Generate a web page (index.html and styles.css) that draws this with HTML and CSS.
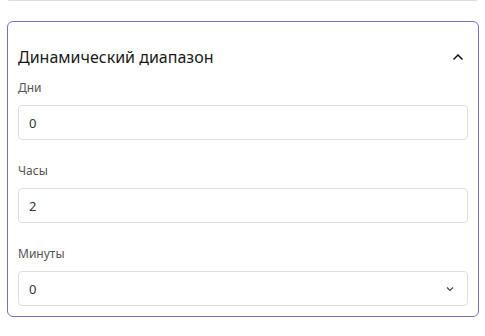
FILE: index.html
```html
<!DOCTYPE html>
<html lang="ru">
<head>
    <meta charset="UTF-8">
    <meta name="viewport" content="width=device-width, initial-scale=1.0">
    <title>Динамический диапазон</title>
    <link rel="stylesheet" href="styles.css">
</head>
<body>
    <div class="prev-panel"></div>

    <div class="range-card">
        <div class="range-header">
            <span class="range-title">Динамический диапазон</span>
            <svg class="chevron" width="14" height="14" viewBox="0 0 14 14">
                <path d="M2.5 9.5 L7 5 L11.5 9.5" fill="none" stroke="#111" stroke-width="1.5"/>
            </svg>
        </div>

        <div class="field">
            <label class="field-label">Дни</label>
            <div class="field-input">0</div>
        </div>

        <div class="field">
            <label class="field-label">Часы</label>
            <div class="field-input">2</div>
        </div>

        <div class="field">
            <label class="field-label">Минуты</label>
            <div class="field-input field-select">
                <span>0</span>
                <svg width="10" height="10" viewBox="0 0 10 10">
                    <path d="M2 3.5 L5 6.5 L8 3.5" fill="none" stroke="#444" stroke-width="1.2"/>
                </svg>
            </div>
        </div>
    </div>
</body>
</html>
```
FILE: styles.css
```css
body {
    margin: 0;
    background: #fff;
    font-family: 'Noto Sans', sans-serif;
    color: #222;
}

.prev-panel {
    margin: 0 8px;
    height: 0;
    border-bottom: 1px solid #dcdcdc;
    border-radius: 0 0 6px 6px;
}

.range-card {
    margin: 20px 6px 0 7px;
    border: 1px solid #7d6cc4;
    border-radius: 6px;
    padding: 0 10px 10px 10px;
}

.range-header {
    display: flex;
    justify-content: space-between;
    align-items: center;
    height: 30px;
    margin-top: 20px;
    padding-right: 3px;
}

.range-title {
    font-size: 16px;
    color: #1a1a1a;
}

.chevron {
    display: block;
}

.field {
    display: flex;
    flex-direction: column;
    margin-top: 8px;
}

.field + .field {
    margin-top: 23px;
}

.field-label {
    font-size: 12px;
    color: #555;
    height: 16px;
    line-height: 16px;
    margin-bottom: 9px;
}

.field-input {
    height: 35px;
    box-sizing: border-box;
    border: 1px solid #dedede;
    border-radius: 4px;
    padding: 0 10px;
    font-size: 13px;
    color: #333;
    display: flex;
    align-items: center;
}

.field-select {
    justify-content: space-between;
    padding-right: 12px;
}
```
